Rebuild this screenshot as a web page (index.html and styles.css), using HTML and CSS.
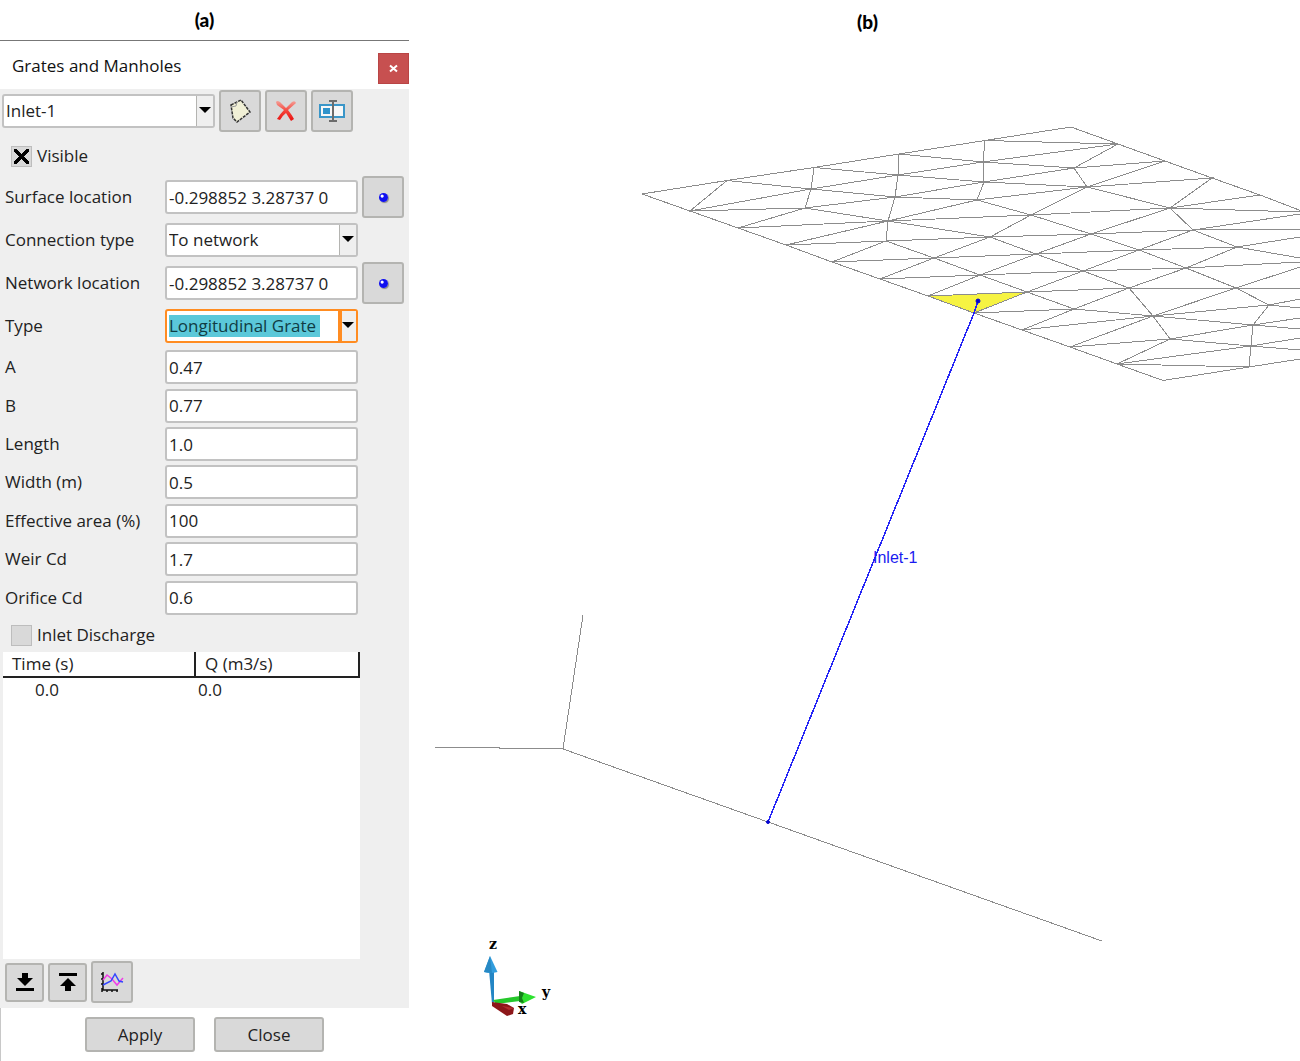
FILE: index.html
```html
<!DOCTYPE html>
<html lang="en">
<head>
<meta charset="utf-8">
<title>Grates and Manholes</title>
<link rel="stylesheet" href="styles.css">
</head>
<body>
<main class="page">
  <section class="side">
    <h2 class="caption">(a)</h2>
    <form class="dialog">
      <header class="titlebar">
        <h1 class="title">Grates and Manholes</h1>
        <button class="close" type="button" aria-label="Close window">
          <svg width="9" height="9" viewBox="0 0 9 9"><path d="M1 1.5 8 7.5M8 1.5 1 7.5" stroke="#fff" stroke-width="2"/></svg>
        </button>
      </header>
      <div class="content">
        <div class="toolbar">
          <span class="combo">
            <select aria-label="Inlet"><option>Inlet-1</option></select>
          </span>
          <button class="tool" type="button" aria-label="New">
            <svg width="24" height="26" viewBox="0 0 24 26"><path d="M3 7 13 2 22 14 9 24 5 20Z" fill="#f1f0d6" stroke="#333" stroke-width="1.5" stroke-dasharray="3 1"/><path d="M3 9 8 8 9 4" fill="none" stroke="#999"/></svg>
          </button>
          <button class="tool" type="button" aria-label="Delete">
            <svg width="24" height="26" viewBox="0 0 24 26"><defs><linearGradient id="red" x1="0" y1="0" x2="0" y2="1"><stop offset="0" stop-color="#f4a098"/><stop offset=".5" stop-color="#f4443a"/><stop offset="1" stop-color="#e81010"/></linearGradient></defs><path d="M2 4Q3 2 6 4L12 10 18 4Q21 2 22 5L14 12Q18 17 20 21L17 23 12 15Q8 18 6 22L3 21Q6 16 10 12L3 7Z" fill="url(#red)"/></svg>
          </button>
          <button class="tool" type="button" aria-label="Rename">
            <svg width="26" height="24" viewBox="0 0 26 24"><path d="M1 6H25V18H1Z" fill="#f7f7f7" stroke="#3a96c8" stroke-width="2"/><path d="M4 9H11V15H4Z" fill="#2f93cb"/><path d="M14 3V21M10 2H18M10 22H18" stroke="#6b6b6b" stroke-width="2" fill="none"/></svg>
          </button>
        </div>
        <label class="check"><input type="checkbox" checked>Visible</label>
        <div class="fields">
          <div class="row row-tall">
            <label for="surface">Surface location</label>
            <input id="surface" class="box" type="text" value="-0.298852 3.28737 0">
            <button class="tool" type="button" aria-label="Pick surface location"><span class="dot"></span></button>
          </div>
          <div class="row">
            <label for="connection">Connection type</label>
            <span class="combo"><select id="connection"><option>To network</option></select></span>
          </div>
          <div class="row row-tall">
            <label for="network">Network location</label>
            <input id="network" class="box" type="text" value="-0.298852 3.28737 0">
            <button class="tool" type="button" aria-label="Pick network location"><span class="dot"></span></button>
          </div>
          <div class="row">
            <label for="type">Type</label>
            <span class="combo combo-active"><select id="type"><option>Longitudinal Grate</option></select></span>
          </div>
        </div>
        <div class="fields values">
          <div class="row"><label for="a">A</label><input id="a" class="box" type="text" value="0.47"></div>
          <div class="row"><label for="b">B</label><input id="b" class="box" type="text" value="0.77"></div>
          <div class="row"><label for="len">Length</label><input id="len" class="box" type="text" value="1.0"></div>
          <div class="row"><label for="wid">Width (m)</label><input id="wid" class="box" type="text" value="0.5"></div>
          <div class="row"><label for="area">Effective area (%)</label><input id="area" class="box" type="text" value="100"></div>
          <div class="row"><label for="weir">Weir Cd</label><input id="weir" class="box" type="text" value="1.7"></div>
          <div class="row"><label for="orifice">Orifice Cd</label><input id="orifice" class="box" type="text" value="0.6"></div>
        </div>
        <label class="check check-low"><input type="checkbox">Inlet Discharge</label>
        <div class="sheet">
          <table>
            <thead><tr><th>Time (s)</th><th>Q (m3/s)</th></tr></thead>
            <tbody><tr><td>0.0</td><td>0.0</td></tr></tbody>
          </table>
        </div>
        <div class="tablebar">
          <button class="tool tool-small" type="button" aria-label="Import">
            <svg width="20" height="20" viewBox="0 0 20 20"><path d="M7 1H13V6H18L10 14 2 6H7ZM1 16H19V19H1Z"/></svg>
          </button>
          <button class="tool tool-small" type="button" aria-label="Export">
            <svg width="20" height="20" viewBox="0 0 20 20"><path d="M7 19H13V14H18L10 6 2 14H7ZM1 1H19V4H1Z"/></svg>
          </button>
          <button class="tool" type="button" aria-label="Plot">
            <svg width="26" height="24" viewBox="0 0 26 24" fill="none"><path d="M4 2V20H19M2 4H4M2 9H4M2 14H4M3 18V22M8 20V22M13 20V22M18 20V22" stroke="#111" stroke-width="1.5"/><path d="M4 10 8 5 13 9 18 15 24 8" stroke="#f03ce8" stroke-width="1.5"/><path d="M4 15 12 11 16 4 20 11 24 12" stroke="#3346ff" stroke-width="1.5"/></svg>
          </button>
        </div>
      </div>
      <footer class="actions">
        <button class="action" type="submit">Apply</button>
        <button class="action" type="button">Close</button>
      </footer>
    </form>
  </section>
  <section class="view">
    <h2 class="caption caption-b">(b)</h2>
    <svg class="scene" viewBox="435 41 865 1020" role="img" aria-label="Mesh and network view">
      <path class="cell" d="M928 296 1027 292 974 313Z"/>
      <g class="mesh">
        <path d="M642 194 727 180.5 814 167.5 899 154 985 140.5 1071 127 1118 144 1165 161 1212 178 1260 195 1307 213"/>
        <path d="M642 194 690 211 738 228 786 245 832 262 880 279 928 296 974 313 1022 330 1070 347 1117 364 1163 380.5 1249 367 1300 359"/>
        <path d="M727 180.5 690 211 811 189 727 180.5M814 167.5 811 189 805 208 690 211M805 208 738 228 888 221 805 208 895 197 811 189 898 175 814 167.5"/>
        <path d="M899 154 898 175 895 197 888 221 886 241M899 154 983 162 898 175 984 182 895 197 977 200 888 221 1031 215M888 221 990 237M888 221 786 245 886 241 832 262 934 258 886 241 990 237"/>
        <path d="M934 258 880 279 980 275 934 258 990 237M934 258 1036 254 980 275 928 296 1027 292 980 275"/>
        <path d="M985 140.5 983 162 984 182 977 200M985 140.5 1118 144 983 162 1074 168 984 182 1087 187 977 200 1031 215M1118 144 1074 168 1165 161 1087 187 1074 168M1087 187 1212 178 1170 208 1087 187 1031 215 1170 208 1260 195M1170 208 1300 212M1170 208 1193 230"/>
        <path d="M1031 215 990 237 1091 234 1031 215M990 237 1036 254 1091 234 1170 208M1193 230 1091 234 1139 250 1193 230 1300 214M1193 230 1300 229M1193 230 1237 247 1300 237M1237 247 1300 258M1237 247 1139 250 1036 254 1083 271 1139 250 1186 268 1237 247"/>
        <path d="M980 275 1083 271 1027 292 974 313 1074 309 1027 292 1129 288 1083 271 1186 268 1129 288 1236 288 1186 268 1300 262M1129 288 1074 309 1022 330 1153 316 1074 309M1129 288 1153 316 1170 339M1300 267 1236 288 1300 288M1236 288 1153 316 1070 347 1170 339 1117 364 1251 346 1170 339 1253 325 1153 316 1269 305 1236 288"/>
        <path d="M1300 299 1269 305 1300 308M1269 305 1253 325 1251 346 1249 367 1117 364M1300 318 1253 325 1300 329M1300 338 1251 346 1300 350"/>
        <path d="M435 747 563 749 583 615M563 749 768 822 1102 941"/>
      </g>
      <g class="inlet">
        <path d="M978 301 974 313 768 822"/>
        <circle cx="978" cy="301" r="2"/><circle cx="768" cy="822" r="1.5"/>
        <text x="873" y="563">Inlet-1</text>
      </g>
      <g class="axes">
        <path d="M489 970H494V1002L492 1004Z" fill="#2385c4"/><path d="M490 956 497.500 972Q490 974 484 972Z" fill="#329ddd"/><path d="M490 956 492 973 484 972Z" fill="#2789c4"/>
        <path d="M493 1000 520 996V1001L496 1004Z" fill="#25c82b"/><path d="M519 991 536 997 522 1004 519 1001Z" fill="#2de22f"/><path d="M519 991 524 993 522 998 524 1003 519 1002Z" fill="#138018"/>
        <path d="M492 1002 507 1004 514 1008 513 1014 507 1016 498 1010 492 1006Z" fill="#8d171a"/><path d="M502 1006 514 1008 509 1010Z" fill="#b32d2e"/>
        <text x="489" y="949">z</text><text x="542" y="997">y</text><text x="518" y="1014">x</text>
      </g>
    </svg>
  </section>
</main>
</body>
</html>
```
FILE: styles.css
```css
* { box-sizing: border-box; }

body {
  margin: 0;
  background: #fff;
  color: #222;
  font: 17px/24px "Open Sans", "Noto Sans", sans-serif;
}

button, input, select { font: inherit; color: inherit; }

.page {
  display: grid;
  grid-template-columns: 409px minmax(0, 1fr);
  column-gap: 26px;
}

.caption {
  height: 40px;
  margin: 0;
  color: #000;
  font: 900 19px/40px Lato, sans-serif;
  text-align: center;
}

.caption-b { height: 41px; line-height: 44px; }

.dialog {
  display: flex;
  flex-direction: column;
  border-top: 1px solid #777;
}

.titlebar {
  display: flex;
  justify-content: space-between;
  height: 48px;
  padding: 12px 0 4px 12px;
}

.title { margin: 0; color: #111; font-size: 17px; font-weight: 400; line-height: 26px; }

.close {
  display: grid;
  place-items: center;
  width: 31px;
  height: 31px;
  padding: 0;
  border: 1px solid #b94545;
  background: #c75050;
}

.content { padding: 1px 0 5px; background: #efefef; }

.toolbar { display: flex; align-items: center; gap: 4px; padding-left: 2px; }
.toolbar .combo { width: 213px; }

.tool {
  display: grid;
  flex: none;
  place-items: center;
  width: 42px;
  height: 42px;
  padding: 0;
  border: 2px solid #b4b4b1;
  border-radius: 3px;
  background: #d9d9d9;
}

.tool-small { width: 39px; height: 39px; }

.dot {
  width: 9px;
  height: 9px;
  border-radius: 50%;
  background: radial-gradient(circle at 35% 35%, #fff 1px, #1010f0 2px);
  box-shadow: 1px 1px 1px #888;
}

.combo { position: relative; display: block; height: 34px; }

.combo select, .box {
  width: 100%;
  height: 34px;
  padding: 0 2px;
  border: 2px solid #c2c2c2;
  border-radius: 3px;
  outline: 0;
  background: #fff;
  appearance: none;
}

/* drop-down part, laid over the right end of the select */
.combo::before {
  content: "";
  position: absolute;
  inset: 2px 2px 2px auto;
  width: 16px;
  border-left: 1px solid #b4b4b1;
  background: #efefef;
  pointer-events: none;
}

.combo::after {
  content: "";
  position: absolute;
  top: 13px;
  right: 4px;
  border: 6px solid transparent;
  border-top-color: #000;
  border-bottom: 0;
  pointer-events: none;
}

.combo-active select {
  border: 2px solid #ff8c21;
  background: linear-gradient(#5bc8d9, #5bc8d9) 2px 4px / 151px 22px no-repeat #fff;
  color: #103c44;
}

.combo-active::before { border-left: 4px solid #ff8c21; width: 14px; }

.check { display: flex; align-items: center; gap: 5px; padding: 12px 0 8px 11px; }
.check-low { padding: 6px 0 5px 11px; }

.check input {
  display: grid;
  place-items: center;
  width: 21px;
  height: 21px;
  margin: 0;
  border: 1px solid #bdbdbd;
  background: #d9d9d9;
  appearance: none;
}

.check input:checked::before {
  content: "";
  width: 15px;
  height: 15px;
  background:
    linear-gradient(45deg, transparent 42%, #000 42% 58%, transparent 58%),
    linear-gradient(-45deg, transparent 42%, #000 42% 58%, transparent 58%);
}

.fields { padding-left: 5px; }

.row {
  display: grid;
  grid-template-columns: 160px 193px 42px;
  align-items: center;
  height: 44px;
}

.row .tool { margin-left: 4px; }
.row-tall { height: 42px; }
.values { display: grid; grid-template-rows: repeat(7, 1fr); height: 269px; }
.values .row { height: auto; }

.sheet { width: 357px; height: 307px; margin-left: 3px; background: #fff; }

table { width: 100%; border-collapse: collapse; table-layout: fixed; }

th {
  height: 25px;
  padding: 0 9px;
  border-right: 2px solid #222;
  border-bottom: 2px solid #222;
  font-weight: 400;
  line-height: 22px;
  text-align: left;
}

th:first-child { width: 192px; }
td { padding: 0 3px; }
td:first-child { padding-left: 32px; }

.tablebar { display: flex; align-items: center; gap: 4px; padding: 2px 0 0 5px; }

.actions {
  display: flex;
  justify-content: center;
  gap: 19px;
  padding: 9px 1px 9px 0;
  border-left: 1px solid #c8c8c8;
}

.action {
  width: 110px;
  height: 35px;
  padding: 0;
  border: 2px solid #b4b4b1;
  border-radius: 3px;
  background: #d9d9d9;
}

.scene { display: block; width: 100%; height: auto; }
.mesh { fill: none; stroke: #8c8c8c; stroke-width: 1; shape-rendering: crispEdges; }
.cell { fill: #f6f342; }
.inlet path { fill: none; stroke: #2525f5; stroke-width: 1.5; shape-rendering: crispEdges; }
.inlet circle { fill: #0505d0; stroke: #0505d0; }
.inlet text { fill: #1a1af0; font: 16px "Liberation Sans", sans-serif; }
.axes text { fill: #000; font: bold 14px "DejaVu Serif", serif; }
```
